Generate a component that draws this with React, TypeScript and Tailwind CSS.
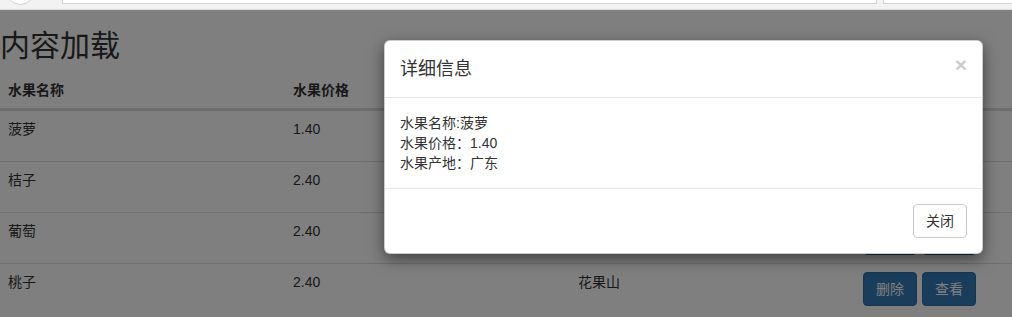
import React from "react";

const rows = [
  { name: "菠萝", price: "1.40", origin: "广东" },
  { name: "桔子", price: "2.40", origin: "花果山" },
  { name: "葡萄", price: "2.40", origin: "花果山" },
  { name: "桃子", price: "2.40", origin: "花果山" },
];

export default function App() {
  return (
    <div
      className="relative w-[1012px] h-[317px] overflow-hidden bg-white text-[#333] text-[14px] leading-[20px]"
      style={{ fontFamily: '"Liberation Sans", "Noto Sans CJK SC", sans-serif' }}
    >
      {/* browser chrome strip */}
      <div className="h-[10px] bg-[#f2f2f2] border-b border-[#dcdcdc] flex items-start overflow-hidden">
        <div className="ml-[6px] mt-[-24px] w-[29px] h-[29px] shrink-0 rounded-full bg-white border border-[#d0d0d0]" />
        <div className="ml-[27px] w-[815px] h-[4px] shrink-0 bg-white border-b border-r border-l border-[#d4d4d4]" />
        <div className="ml-[6px] flex-1 h-[4px] bg-white border-b border-l border-[#d4d4d4]" />
      </div>

      {/* page */}
      <div>
        <h1 className="mt-[20px] mb-[10px] text-[30px] leading-[32px] font-normal">内容加载</h1>
        <div className="grid grid-cols-[285px_285px_285px_1fr]">
          {["水果名称", "水果价格", "水果产地", "操作"].map((h) => (
            <div key={h} className="px-[8px] py-[8px] font-bold border-b-2 border-[#ddd]">
              {h}
            </div>
          ))}
          {rows.map((r) => (
            <React.Fragment key={r.name}>
              <div className="p-[8px] border-t border-[#ddd]">{r.name}</div>
              <div className="p-[8px] border-t border-[#ddd]">{r.price}</div>
              <div className="p-[8px] border-t border-[#ddd]">{r.origin}</div>
              <div className="p-[8px] border-t border-[#ddd] flex gap-[5px]">
                <button className="px-[12px] py-[6px] rounded-[4px] bg-[#337ab7] border border-[#2e6da4] text-white leading-[20px]">
                  删除
                </button>
                <button className="px-[12px] py-[6px] rounded-[4px] bg-[#337ab7] border border-[#2e6da4] text-white leading-[20px]">
                  查看
                </button>
              </div>
            </React.Fragment>
          ))}
        </div>
      </div>

      {/* backdrop */}
      <div className="absolute left-0 right-0 top-[10px] bottom-0 bg-black/50" />

      {/* modal */}
      <div className="absolute left-[384px] top-[40px] w-[599px] bg-white border border-black/20 rounded-[6px] shadow-[0_5px_15px_rgba(0,0,0,0.5)]">
        <div className="p-[15px] border-b border-[#e5e5e5] flex items-start justify-between">
          <h4 className="text-[18px] leading-[26px] font-normal">详细信息</h4>
          <button className="mt-[-2px] text-[21px] leading-[21px] font-bold text-black opacity-20 [text-shadow:0_1px_0_#fff]">
            ×
          </button>
        </div>
        <div className="p-[15px]">
          <div>水果名称:菠萝</div>
          <div>水果价格：1.40</div>
          <div>水果产地：广东</div>
        </div>
        <div className="p-[15px] border-t border-[#e5e5e5] flex justify-end">
          <button className="px-[12px] py-[6px] rounded-[4px] bg-white border border-[#ccc] text-[#333] leading-[20px]">
            关闭
          </button>
        </div>
      </div>
    </div>
  );
}
